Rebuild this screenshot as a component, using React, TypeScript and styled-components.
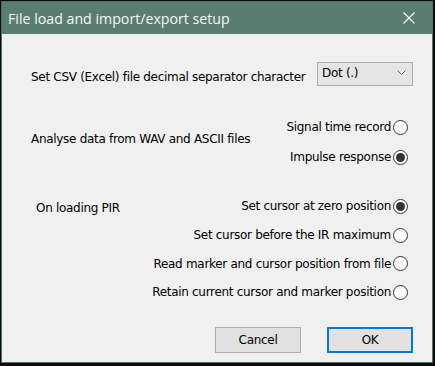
import React from "react";
import styled, { createGlobalStyle } from "styled-components";

const Global = createGlobalStyle`
  html, body { margin: 0; padding: 0; background: #0b0b0b; }
  body { width: 435px; height: 366px; overflow: hidden; }
`;

const Dialog = styled.div`
  box-sizing: border-box;
  margin: 1px 0 0 1px;
  width: 432px;
  height: 362px;
  background: #f0f0f0;
  border: 1px solid #4f7064;
  display: flex;
  flex-direction: column;
  font-family: "DejaVu Sans", Tahoma, sans-serif;
  font-size: 12px;
  letter-spacing: -0.3px;
  color: #000;
`;

const TitleBar = styled.div`
  height: 32px;
  background: #5a7d71;
  display: flex;
  align-items: center;
  justify-content: space-between;
  padding: 0 0 0 6px;
  color: #f4f7f6;
  font-family: "Open Sans", "Noto Sans", sans-serif;
  font-size: 14.2px;
  letter-spacing: 0;
  flex-shrink: 0;
`;

const CloseBtn = styled.div`
  width: 46px;
  height: 32px;
  display: flex;
  align-items: center;
  justify-content: center;
`;

const Content = styled.div`
  flex: 1;
  display: flex;
  flex-direction: column;
  padding: 28px 19px 0 29px;
`;

const Row = styled.div`
  display: flex;
  align-items: center;
  justify-content: space-between;
`;

const RowLabel = styled.span`
  padding-top: 5px;
`;

const Select = styled.div`
  box-sizing: border-box;
  width: 96px;
  height: 24px;
  background: #e5e5e5;
  border: 1px solid #adadad;
  display: flex;
  align-items: center;
  justify-content: space-between;
  padding: 0 6px 2px 4px;
`;

const Section = styled.div<{ $top: number }>`
  display: flex;
  justify-content: space-between;
  align-items: flex-start;
  margin-top: ${(p) => p.$top}px;
`;

const SideLabel = styled.div<{ $top: number; $left: number }>`
  padding-top: ${(p) => p.$top}px;
  padding-left: ${(p) => p.$left}px;
`;

const RadioList = styled.div`
  display: flex;
  flex-direction: column;
  align-items: flex-end;
  margin-right: 5px;
`;

const RadioRow = styled.div<{ $h: number }>`
  height: ${(p) => p.$h}px;
  display: flex;
  align-items: center;
  gap: 2px;
`;

const RadioCircle = styled.span<{ $on?: boolean }>`
  box-sizing: border-box;
  width: 15px;
  height: 15px;
  border-radius: 50%;
  border: 1px solid #333;
  background: #fff;
  display: flex;
  align-items: center;
  justify-content: center;
  &::after {
    content: "";
    display: ${(p) => (p.$on ? "block" : "none")};
    width: 9px;
    height: 9px;
    border-radius: 50%;
    background: #333;
  }
`;

const Buttons = styled.div`
  display: flex;
  justify-content: flex-end;
  gap: 26px;
  margin-top: auto;
  margin-bottom: 9px;
`;

const Button = styled.div<{ $primary?: boolean }>`
  box-sizing: border-box;
  width: 86px;
  height: 26px;
  display: flex;
  align-items: center;
  justify-content: center;
  background: #e1e1e1;
  border: ${(p) => (p.$primary ? "2px solid #0078d7" : "1px solid #adadad")};
`;

const Radio = ({ label, on, h }: { label: string; on?: boolean; h: number }) => (
  <RadioRow $h={h}>
    <span>{label}</span>
    <RadioCircle $on={on} />
  </RadioRow>
);

export default function App() {
  return (
    <>
      <Global />
      <Dialog>
        <TitleBar>
          <span>File load and import/export setup</span>
          <CloseBtn>
            <svg width="12" height="12" viewBox="0 0 12 12">
              <path d="M0.5 0.5 L11.5 11.5 M11.5 0.5 L0.5 11.5" stroke="#f4f7f6" strokeWidth="1.2" />
            </svg>
          </CloseBtn>
        </TitleBar>
        <Content>
          <Row>
            <RowLabel>Set CSV (Excel) file decimal separator character</RowLabel>
            <Select>
              <span>Dot (.)</span>
              <svg width="9" height="6" viewBox="0 0 9 6">
                <path d="M0.5 0.5 L4.5 4.5 L8.5 0.5" stroke="#606060" fill="none" strokeWidth="1" />
              </svg>
            </Select>
          </Row>
          <Section $top={26}>
            <SideLabel $top={20} $left={0}>Analyse data from WAV and ASCII files</SideLabel>
            <RadioList>
              <Radio label="Signal time record" h={30} />
              <Radio label="Impulse response" on h={30} />
            </RadioList>
          </Section>
          <Section $top={20}>
            <SideLabel $top={9} $left={5}>On loading PIR</SideLabel>
            <RadioList>
              <Radio label="Set cursor at zero position" on h={28.7} />
              <Radio label="Set cursor before the IR maximum" h={28.7} />
              <Radio label="Read marker and cursor position from file" h={28.7} />
              <Radio label="Retain current cursor and marker position" h={28.7} />
            </RadioList>
          </Section>
          <Buttons>
            <Button>Cancel</Button>
            <Button $primary>OK</Button>
          </Buttons>
        </Content>
      </Dialog>
    </>
  );
}
